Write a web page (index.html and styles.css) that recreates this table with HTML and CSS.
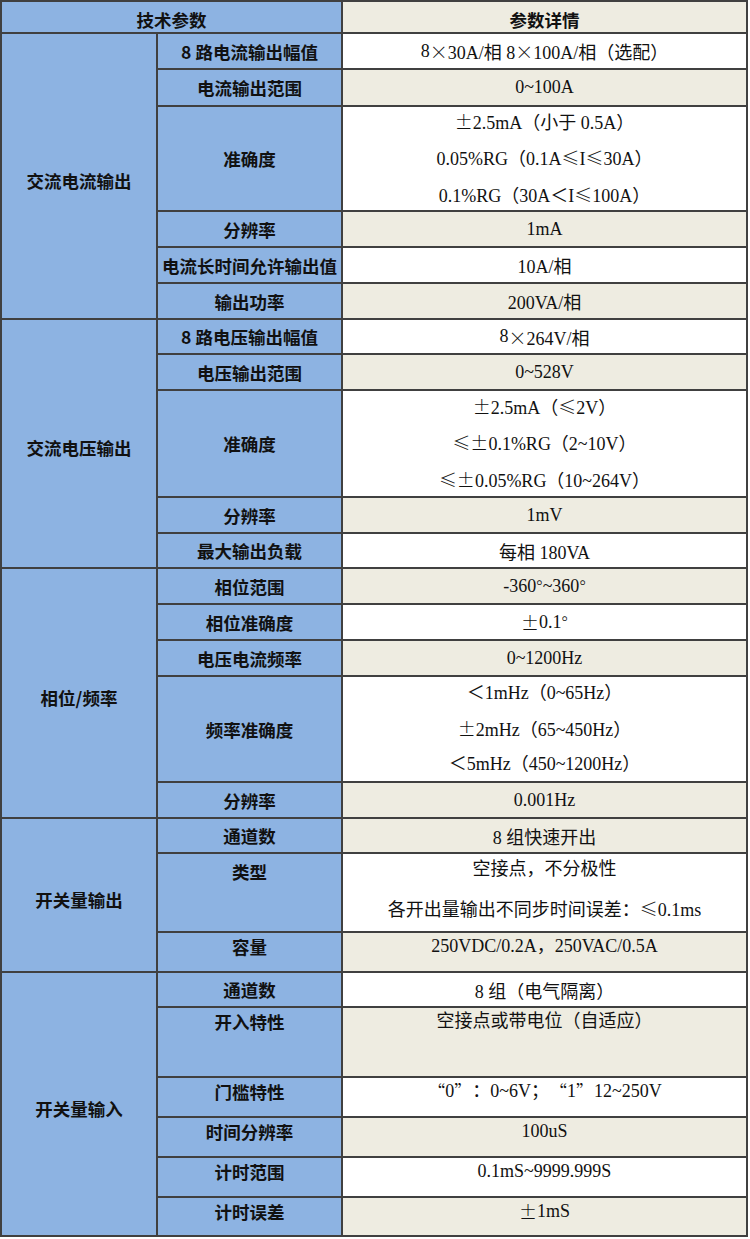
FILE: index.html
```html
<!DOCTYPE html>
<html lang="zh-CN">
<head>
<meta charset="utf-8">
<title>技术参数</title>
<link rel="stylesheet" href="styles.css">
</head>
<body>
<div class="spec">
  <div class="cell head-a">技术参数</div>
  <div class="cell head-b">参数详情</div>

  <div class="cell group g6">交流电流输出</div>
  <div class="cell label">8 路电流输出幅值</div>
  <div class="cell val">8<span class="fw">×</span>30A/相 8<span class="fw">×</span>100A/相（选配）</div>
  <div class="cell label">电流输出范围</div>
  <div class="cell val alt">0~100A</div>
  <div class="cell label">准确度</div>
  <div class="cell val multi"><div><span class="fw">±</span>2.5mA（小于 0.5A）</div><div>0.05%RG（0.1A<span class="fw">≤</span>I<span class="fw">≤</span>30A）</div><div>0.1%RG（30A＜I<span class="fw">≤</span>100A）</div></div>
  <div class="cell label">分辨率</div>
  <div class="cell val alt">1mA</div>
  <div class="cell label">电流长时间允许输出值</div>
  <div class="cell val">10A/相</div>
  <div class="cell label">输出功率</div>
  <div class="cell val alt">200VA/相</div>

  <div class="cell group g5">交流电压输出</div>
  <div class="cell label">8 路电压输出幅值</div>
  <div class="cell val">8<span class="fw">×</span>264V/相</div>
  <div class="cell label">电压输出范围</div>
  <div class="cell val alt">0~528V</div>
  <div class="cell label">准确度</div>
  <div class="cell val multi"><div><span class="fw">±</span>2.5mA（<span class="fw">≤</span>2V）</div><div><span class="fw">≤±</span>0.1%RG（2~10V）</div><div><span class="fw">≤±</span>0.05%RG（10~264V）</div></div>
  <div class="cell label">分辨率</div>
  <div class="cell val alt">1mV</div>
  <div class="cell label">最大输出负载</div>
  <div class="cell val">每相 180VA</div>

  <div class="cell group g5">相位/频率</div>
  <div class="cell label">相位范围</div>
  <div class="cell val alt">-360<span class="fw">°</span>~360<span class="fw">°</span></div>
  <div class="cell label">相位准确度</div>
  <div class="cell val"><span class="fw">±</span>0.1<span class="fw">°</span></div>
  <div class="cell label">电压电流频率</div>
  <div class="cell val alt">0~1200Hz</div>
  <div class="cell label">频率准确度</div>
  <div class="cell val multi"><div>＜1mHz（0~65Hz）</div><div><span class="fw">±</span>2mHz（65~450Hz）</div><div>＜5mHz（450~1200Hz）</div></div>
  <div class="cell label">分辨率</div>
  <div class="cell val alt">0.001Hz</div>

  <div class="cell group g3">开关量输出</div>
  <div class="cell label">通道数</div>
  <div class="cell val alt">8 组快速开出</div>
  <div class="cell label top type">类型</div>
  <div class="cell val top type-val"><div>空接点，不分极性</div><div>各开出量输出不同步时间误差：<span class="fw">≤</span>0.1ms</div></div>
  <div class="cell label top">容量</div>
  <div class="cell val alt top">250VDC/0.2A，250VAC/0.5A</div>

  <div class="cell group g6">开关量输入</div>
  <div class="cell label">通道数</div>
  <div class="cell val">8 组（电气隔离）</div>
  <div class="cell label top">开入特性</div>
  <div class="cell val alt top">空接点或带电位（自适应）</div>
  <div class="cell label top">门槛特性</div>
  <div class="cell val top"><span class="fw">“</span>0<span class="fw">”</span>：0~6V；<span class="fw">“</span>1<span class="fw">”</span>12~250V</div>
  <div class="cell label top">时间分辨率</div>
  <div class="cell val alt top">100uS</div>
  <div class="cell label top">计时范围</div>
  <div class="cell val top">0.1mS~9999.999S</div>
  <div class="cell label top">计时误差</div>
  <div class="cell val alt top"><span class="fw">±</span>1mS</div>
</div>
</body>
</html>
```
FILE: styles.css
```css
html, body {
  margin: 0;
  padding: 0;
  background: #ffffff;
}

.spec {
  display: grid;
  grid-template-columns: 154px 183px 403px;
  grid-template-rows:
    30px 34px 35px 103px 34px 34px 34px
    33px 34px 105px 34px 33px
    34px 34px 34px 104px 34px
    33px 77px 38px
    33px 68px 38px 38px 38px 37px;
  gap: 2px;
  padding: 2px;
  width: max-content;
  background: #404040;
  color: #111111;
}

.cell {
  display: flex;
  align-items: center;
  justify-content: center;
  text-align: center;
  white-space: nowrap;
  overflow: hidden;
}

.head-a,
.group,
.label {
  background: #8db3e2;
  font-family: "Noto Sans CJK SC", "Noto Sans", sans-serif;
  font-weight: 700;
  font-size: 17.5px;
  color: #111111;
}

.head-a {
  grid-column: span 2;
  padding-top: 4px;
}

.head-b {
  background: #eeece1;
  font-family: "Noto Sans CJK SC", "Noto Sans", sans-serif;
  font-weight: 700;
  font-size: 17.5px;
  padding-top: 4px;
}

.group {
  padding-top: 8px;
}

.g6 { grid-row: span 6; }
.g5 { grid-row: span 5; }
.g3 { grid-row: span 3; }

.val {
  background: #ffffff;
  font-family: "Liberation Serif", "Noto Sans CJK SC", serif;
  font-size: 18px;
  color: #111111;
}

.val.alt {
  background: #eeece1;
}

.fw {
  font-family: "Noto Sans CJK SC", sans-serif;
  font-weight: 300;
}

.multi {
  flex-direction: column;
  line-height: 34.5px;
}

.top {
  align-items: flex-start;
  line-height: 27px;
}

.type {
  line-height: 36px;
}

.type-val {
  flex-direction: column;
  align-items: center;
  justify-content: flex-start;
  line-height: 30px;
  gap: 9px;
}
```
